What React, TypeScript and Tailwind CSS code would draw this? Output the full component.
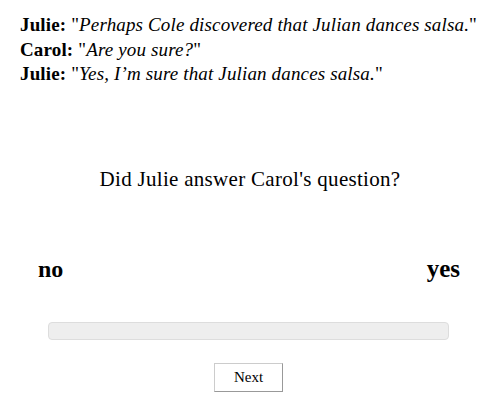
export default function App() {
  return (
    <div className="w-[500px] h-[405px] bg-white text-black font-['Liberation_Serif',serif]">
      <div className="pt-[13px] pl-[20px] text-[19px] leading-[24.5px] tracking-[0.15px]">
        <p>
          <b>Julie:</b> "<i>Perhaps Cole discovered that Julian dances salsa.</i>"
        </p>
        <p>
          <b>Carol:</b> "<i>Are you sure?</i>"
        </p>
        <p>
          <b>Julie:</b> "<i>Yes, I’m sure that Julian dances salsa.</i>"
        </p>
      </div>

      <p className="mt-[79px] text-center text-[21px] leading-[26px] tracking-[0.3px]">
        Did Julie answer Carol's question?
      </p>

      <div className="mt-[62px] flex justify-between pl-[38px] pr-[40px] text-[24px] leading-[30px] font-bold">
        <span>no</span>
        <span className="text-[25px]">yes</span>
      </div>

      <div className="mt-[38px] ml-[48px] w-[401px] h-[18px] rounded-[4px] border border-[#ddd] bg-[#eee]" />

      <div className="mt-[23px] flex justify-center pr-[3px]">
        <button className="w-[69px] h-[29px] border border-[#ccc] border-b-[#999] border-r-[#999] bg-white text-[15px]">
          Next
        </button>
      </div>
    </div>
  );
}
